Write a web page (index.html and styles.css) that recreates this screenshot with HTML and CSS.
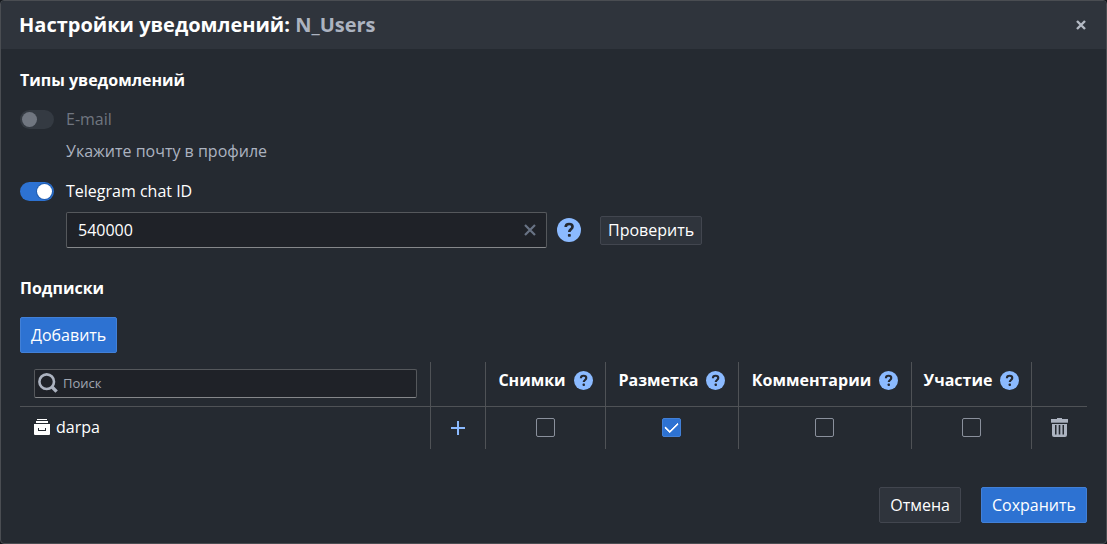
FILE: index.html
```html
<!DOCTYPE html>
<html lang="ru">
<head>
<meta charset="utf-8">
<meta name="viewport" content="width=device-width, initial-scale=1">
<title>Настройки уведомлений</title>
<link rel="stylesheet" href="styles.css">
</head>
<body>
<svg class="sprite" aria-hidden="true">
  <symbol id="help" viewBox="0 0 24 24">
    <circle cx="12" cy="12" r="12" fill="#8bbaff"/>
    <path d="M8.700 9c0-2 1.300-3 3.400-3s3.400 1 3.400 2.800c0 2.300-3.200 2.800-3.200 5.200" fill="none" stroke="#242830" stroke-width="2.700"/>
    <rect x="10.900" y="15.900" width="2.900" height="2.900" rx=".8" fill="#242830"/>
  </symbol>
</svg>
<form class="dialog">
  <header class="dialog-header">
    <h1 class="dialog-title">Настройки уведомлений: <span class="dialog-subject">N_Users</span></h1>
    <button class="icon-button" type="button" aria-label="Закрыть">
      <svg width="10" height="10" viewBox="0 0 10 10"><path d="M1 1l8 8M9 1L1 9" stroke="#b4bac4" stroke-width="2.4"/></svg>
    </button>
  </header>

  <div class="dialog-body">
    <section class="types">
      <h2 class="section-title">Типы уведомлений</h2>
      <label class="option option-disabled"><input class="toggle" type="checkbox" disabled>E-mail</label>
      <p class="hint">Укажите почту в профиле</p>
      <label class="option"><input class="toggle" type="checkbox" checked>Telegram chat ID</label>
      <div class="chat-row">
        <div class="field">
          <input class="field-input" type="text" value="540000" aria-label="Telegram chat ID">
          <button class="icon-button" type="button" aria-label="Очистить">
            <svg width="12" height="12" viewBox="0 0 12 12"><path d="M1 1l10 10M11 1L1 11" stroke="#687384" stroke-width="2.2"/></svg>
          </button>
        </div>
        <button class="icon-button" type="button" aria-label="Справка"><svg width="24" height="24"><use href="#help"/></svg></button>
        <button class="button button-small" type="button">Проверить</button>
      </div>
    </section>

    <section class="subscriptions">
      <h2 class="section-title">Подписки</h2>
      <button class="button button-primary" type="button">Добавить</button>
      <table class="grid">
        <colgroup>
          <col><col class="col-add"><col class="col-short"><col class="col-medium"><col class="col-long"><col class="col-short"><col class="col-remove">
        </colgroup>
        <thead>
          <tr>
            <th class="cell-name">
              <label class="search">
                <svg width="20" height="20" viewBox="0 0 20 20"><circle cx="8.7" cy="8.7" r="7.3" fill="none" stroke="#acb3c0" stroke-width="2.6"/><path d="M13.8 13.8l4.8 4.8" stroke="#acb3c0" stroke-width="3.4"/></svg>
                <input class="search-input" type="search" placeholder="Поиск" aria-label="Поиск">
              </label>
            </th>
            <th></th>
            <th><span class="column-title">Снимки <svg width="19" height="19"><use href="#help"/></svg></span></th>
            <th><span class="column-title">Разметка <svg width="19" height="19"><use href="#help"/></svg></span></th>
            <th><span class="column-title">Комментарии <svg width="19" height="19"><use href="#help"/></svg></span></th>
            <th><span class="column-title">Участие <svg width="19" height="19"><use href="#help"/></svg></span></th>
            <th></th>
          </tr>
        </thead>
        <tbody>
          <tr>
            <td class="cell-name">
              <span class="project">
                <svg width="16" height="16" viewBox="0 0 16 16" fill="#fff"><path d="M3 0h10v1H3zM2 2h12v2H2z"/><path fill-rule="evenodd" d="M0 5h16v10q0 1-1 1H1q-1 0-1-1zM4 9v3h8V9h-1v2H5V9z"/></svg>
                darpa
              </span>
            </td>
            <td><button class="icon-button" type="button" aria-label="Добавить"><svg width="14" height="14" viewBox="0 0 14 14"><path d="M7 0v14M0 7h14" stroke="#8bbaff" stroke-width="2"/></svg></button></td>
            <td><input class="check" type="checkbox" aria-label="Снимки"></td>
            <td><input class="check" type="checkbox" aria-label="Разметка" checked></td>
            <td><input class="check" type="checkbox" aria-label="Комментарии"></td>
            <td><input class="check" type="checkbox" aria-label="Участие"></td>
            <td><button class="icon-button" type="button" aria-label="Удалить"><svg width="17" height="19" viewBox="0 0 17 19"><path d="M6 0h5v1h6v3H0V1h6z" fill="#acb3c0"/><path d="M0 4h17v1H0z" fill="#828995"/><path fill-rule="evenodd" d="M1 6h15v11q0 2-2 2H3q-2 0-2-2zM4 7v9.500h1.500V7zM7.700 7v9.500h1.600V7zM11.500 7v9.500H13V7z" fill="#acb3c0"/></svg></button></td>
          </tr>
        </tbody>
      </table>
    </section>

    <footer class="actions">
      <button class="button" type="button">Отмена</button>
      <button class="button button-primary" type="submit">Сохранить</button>
    </footer>
  </div>
</form>
</body>
</html>
```
FILE: styles.css
```css
* { box-sizing: border-box; }

body {
  margin: 0;
  background: #14171c;
  color: #fff;
  font: 16px/24px "Open Sans", "Noto Sans", sans-serif;
}

button, input { font: inherit; color: inherit; }
svg { display: block; flex: none; }
.sprite { position: absolute; width: 0; height: 0; }

.dialog {
  min-height: 100vh;
  border: 1px solid #4a4d52;
  border-radius: 4px;
  background: #252a31;
  overflow: hidden;
}

.dialog-header {
  display: flex;
  align-items: center;
  justify-content: space-between;
  padding: 10px 20px 10px 18px;
  background: #2f343c;
}

.dialog-title { margin: 0; font-size: 20px; line-height: 28px; font-weight: 700; }
.dialog-subject { color: #acb3c0; }

.icon-button {
  display: inline-flex;
  flex: none;
  padding: 0;
  border: 0;
  background: none;
  cursor: pointer;
}

.dialog-body { padding: 19px 19px 20px; }
.section-title { margin: 0 0 15px; font-size: 16px; line-height: 24px; font-weight: 700; }

.option { display: flex; align-items: center; gap: 12px; }
.option-disabled { color: #707680; }
.hint { margin: 8px 0 16px 46px; color: #acb3c0; }

.toggle {
  appearance: none;
  flex: none;
  display: flex;
  width: 34px;
  height: 19px;
  margin: 0;
  padding: 2px;
  border-radius: 10px;
  background: #343a42;
}
.toggle::before {
  content: "";
  width: 15px;
  height: 15px;
  border-radius: 50%;
  background: #707680;
}
.toggle:checked { justify-content: flex-end; background: #2d72d2; }
.toggle:checked::before { background: #fff; box-shadow: 0 0 0 1px #215db0; }

.chat-row { display: flex; align-items: center; margin: 9px 0 0 46px; gap: 10px; }
.field {
  display: flex;
  align-items: center;
  flex: 0 1 481px;
  min-width: 0;
  height: 36px;
  padding: 0 10px 0 11px;
  border: 1px solid #55585c;
  border-bottom-color: #85878a;
  border-radius: 2px;
  background: #1f2228;
}
.field-input { flex: 1; min-width: 0; padding: 0; border: 0; outline: 0; background: none; }

.button {
  height: 36px;
  padding: 0 10px;
  border: 1px solid #42464f;
  border-radius: 2px;
  background: #2f343c;
  cursor: pointer;
}
.button-small { height: 29px; margin-left: 9px; padding: 0 7px; line-height: 24px; }
.button-primary { border-color: #4280d7; background: #2d72d2; }

.subscriptions { margin-top: 28px; }
.subscriptions .section-title { margin-bottom: 17px; }
.subscriptions .button-primary { display: block; }

.grid { width: 100%; margin-top: 9px; border-collapse: separate; border-spacing: 0; table-layout: fixed; }
.col-add { width: 55px; }
.col-short { width: 120px; }
.col-medium { width: 133px; }
.col-long { width: 173px; }
.col-remove { width: 56px; }
.grid th, .grid td { padding: 0; border-left: 1px solid #4f5256; text-align: center; vertical-align: middle; }
.grid th:first-child, .grid td:first-child { border-left: 0; }
.grid th { height: 45px; border-bottom: 1px solid #4f5256; padding-bottom: 8px; }
.grid td { height: 42px; padding: 0 1px 4px 0; }
.grid td > * { vertical-align: middle; }
.grid .cell-name { padding: 0 13px 2px 14px; text-align: left; }
.column-title { display: flex; align-items: center; justify-content: center; gap: 8px; }

.search {
  display: flex;
  align-items: center;
  gap: 5px;
  height: 29px;
  padding: 0 3px;
  border: 1px solid #55585c;
  border-bottom-color: #85878a;
  border-radius: 2px;
  background: #1f2228;
}
.search-input {
  flex: 1;
  min-width: 0;
  padding: 0;
  border: 0;
  outline: 0;
  background: none;
  font-size: 13px;
  font-weight: 400;
}
.search-input::placeholder { color: #a0a6b1; opacity: 1; }

.project { display: flex; align-items: center; gap: 6px; line-height: 24px; }

.check {
  appearance: none;
  width: 19px;
  height: 19px;
  margin: 0;
  border: 1px solid #8a909c;
  border-radius: 2px;
}
.check:checked { display: inline-grid; place-items: center; border-color: #4280d7; background: #2d72d2; }
.check:checked::before {
  content: "";
  width: 11px;
  height: 6px;
  margin-bottom: 3px;
  border: solid #fff;
  border-width: 0 0 2px 2px;
  border-radius: 1px;
  scale: 1;
  rotate: -45deg;
}

.actions { display: flex; justify-content: flex-end; gap: 20px; margin-top: 38px; }
```
